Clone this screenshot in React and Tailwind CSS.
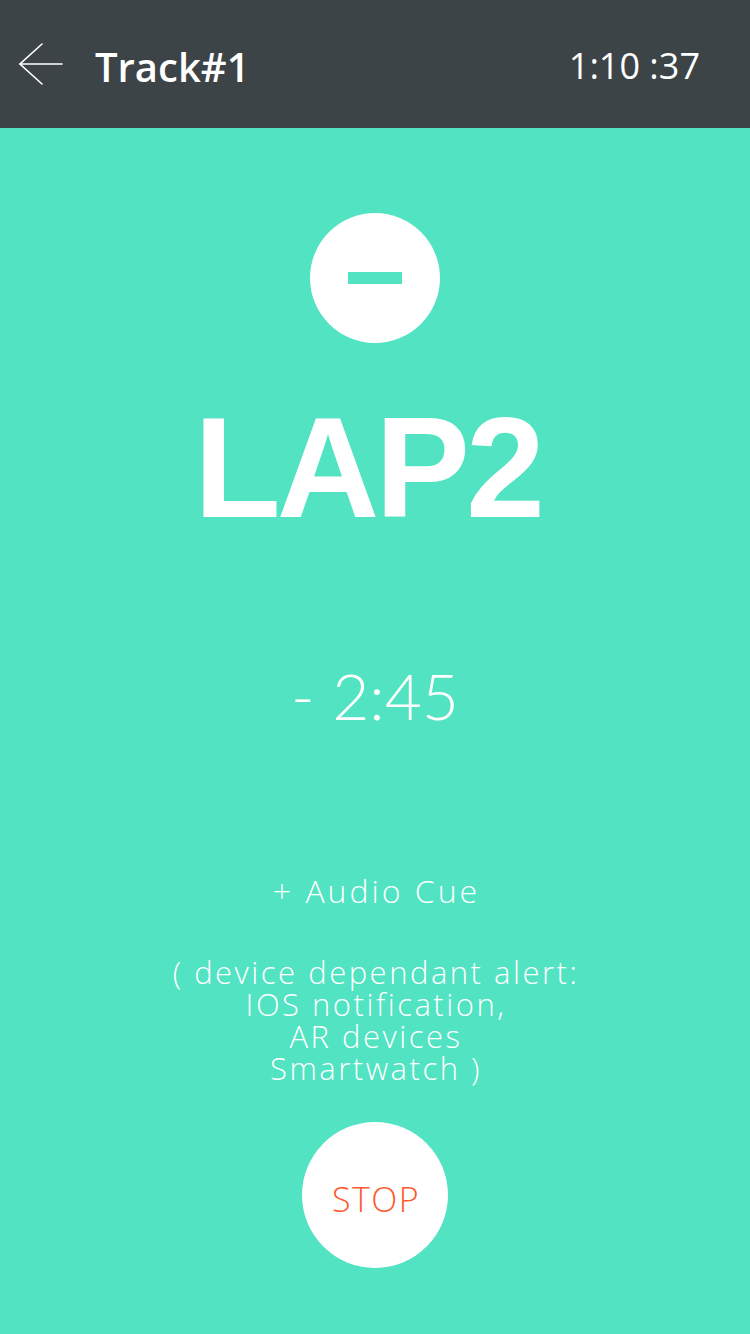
import React from 'react';

const bodyFont = { fontFamily: 'Lato, "Open Sans", sans-serif' };

function BackArrow() {
  return (
    <svg width="44" height="44" viewBox="0 0 44 44" fill="none" stroke="white" strokeWidth="1.6" strokeLinecap="round">
      <line x1="1" y1="22" x2="43" y2="22" />
      <polyline points="23,2 1,22 23,42" />
    </svg>
  );
}

export default function App() {
  return (
    <div className="w-[750px] min-h-[1334px] bg-[#51e3c2] flex flex-col" style={bodyFont}>
      <header className="h-[128px] bg-[#3d4447] flex items-center pl-[19px] pr-[50px] text-white">
        <BackArrow />
        <span className="ml-[32px] mt-[6px] text-[40px] font-semibold font-['Open_Sans',sans-serif] leading-none">
          Track#1
        </span>
        <span className="ml-auto mt-[4px] text-[36px] font-['Open_Sans',sans-serif] leading-none">
          1:10 :37
        </span>
      </header>

      <main className="flex flex-col items-center text-white">
        <div className="mt-[85px] w-[130px] h-[130px] rounded-full bg-white flex items-center justify-center">
          <div className="w-[54px] h-[12px] bg-[#51e3c2]" />
        </div>

        <h1 className="mt-[54px] pr-[15px] h-[142px] text-[142px] leading-[142px] font-bold tracking-[-4px] font-['Liberation_Sans',Arial,sans-serif]">
          LAP2
        </h1>

        <div className="mt-[125px] text-[64px] leading-[64px] font-light">
          - 2:45
        </div>

        <div className="mt-[148px] pl-[3px] text-[32px] leading-[30px] font-light font-['Open_Sans',sans-serif] tracking-[3px]">
          + Audio Cue
        </div>

        <p className="mt-[50px] pl-[2px] text-[31px] leading-[32px] font-light text-center font-['Open_Sans',sans-serif] tracking-[2.5px]">
          ( device dependant alert:
          <br />
          IOS notification,
          <br />
          AR devices
          <br />
          Smartwatch )
        </p>

        <button className="mt-[38px] pt-[8px] pl-[2px] w-[146px] h-[146px] rounded-full bg-white flex items-center justify-center text-[34px] tracking-[1.5px] font-light font-['Open_Sans',sans-serif] text-[#fd5a2e]">
          STOP
        </button>
      </main>
    </div>
  );
}
